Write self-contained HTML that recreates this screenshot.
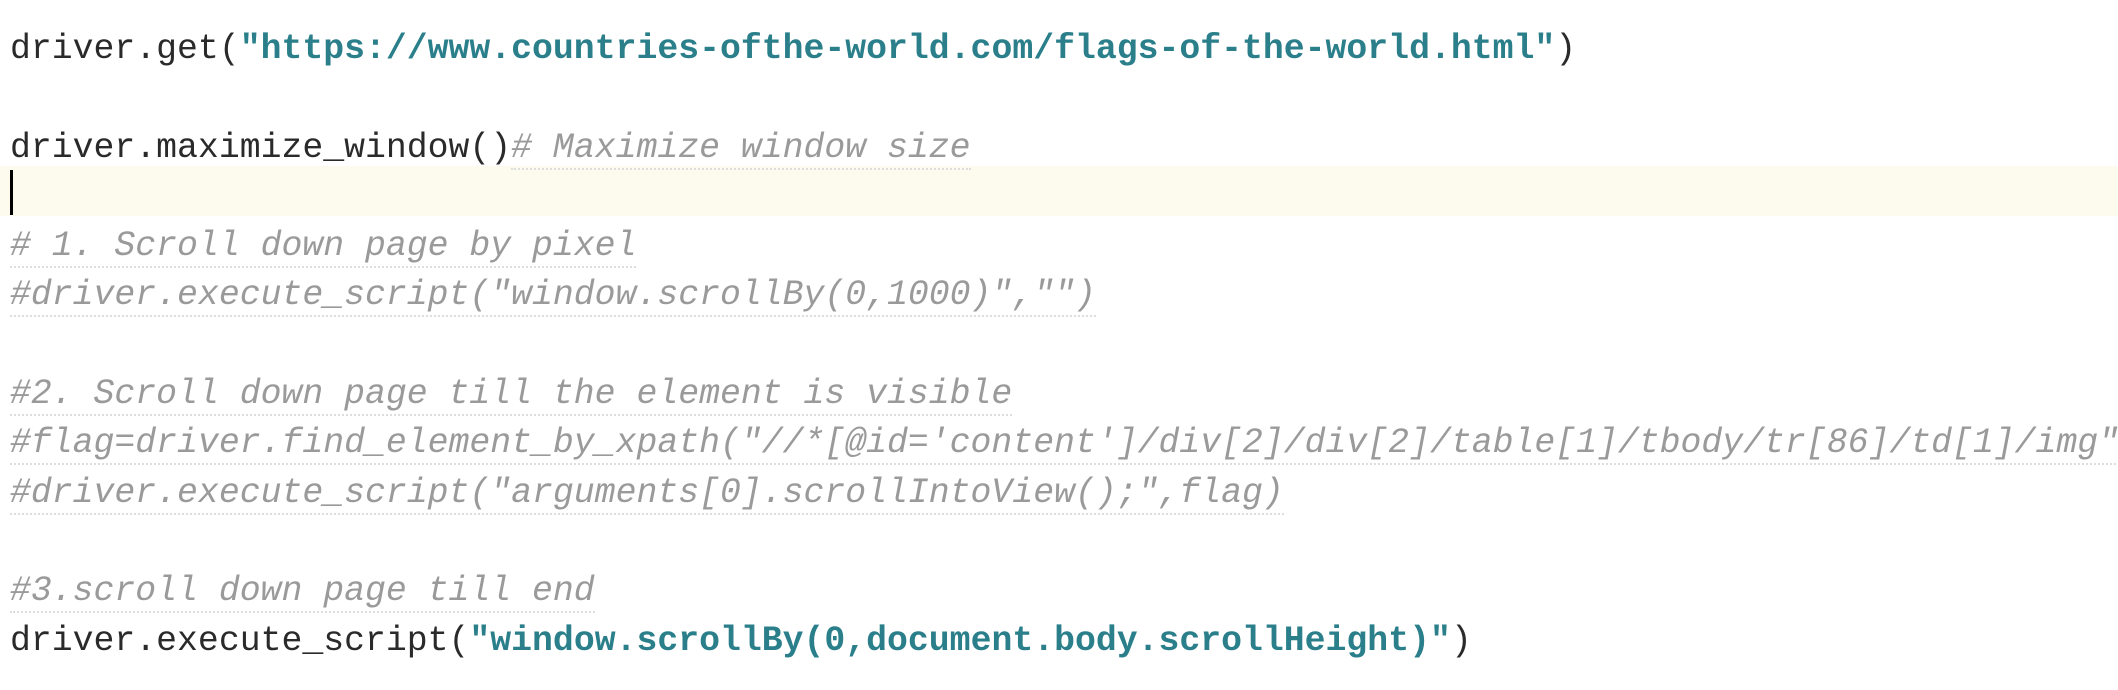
<!DOCTYPE html>
<html><head><meta charset="utf-8"><style>
html,body{margin:0;padding:0;background:#fff;width:2118px;height:690px;overflow:hidden}
.hl{position:absolute;left:0;top:166px;width:2118px;height:50px;background:#fdfbee}
.cur{position:absolute;left:10px;top:170px;width:3px;height:45px;background:#000}
.code{position:absolute;left:10px;top:25px;font-family:"Liberation Mono",monospace;font-size:34.8px;line-height:49.3px;color:#2a2a2a;width:2200px}
.l{height:49.3px;white-space:pre}
.s{color:#2a7f8a;font-weight:bold}
.c{color:#9a9a9a;font-style:italic;border-bottom:2px dotted #ddd}
</style></head><body>
<div class="hl"></div><div class="cur"></div>
<div class="code"><div class="l">driver.get(<span class="s">"https://www.countries-ofthe-world.com/flags-of-the-world.html"</span>)</div><div class="l"> </div><div class="l">driver.maximize_window()<span class="c"># Maximize window size</span></div><div class="l"> </div><div class="l"><span class="c"># 1. Scroll down page by pixel</span></div><div class="l"><span class="c">#driver.execute_script("window.scrollBy(0,1000)","")</span></div><div class="l"> </div><div class="l"><span class="c">#2. Scroll down page till the element is visible</span></div><div class="l"><span class="c">#flag=driver.find_element_by_xpath("//*[@id='content']/div[2]/div[2]/table[1]/tbody/tr[86]/td[1]/img")</span></div><div class="l"><span class="c">#driver.execute_script("arguments[0].scrollIntoView();",flag)</span></div><div class="l"> </div><div class="l"><span class="c">#3.scroll down page till end</span></div><div class="l">driver.execute_script(<span class="s">"window.scrollBy(0,document.body.scrollHeight)"</span>)</div></div>
</body></html>
